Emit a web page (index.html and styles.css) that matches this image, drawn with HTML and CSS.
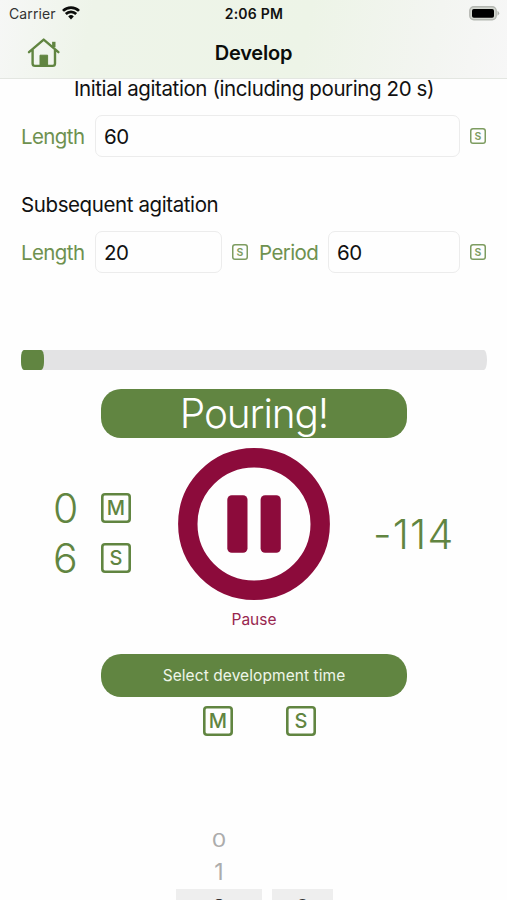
FILE: index.html
```html
<!DOCTYPE html>
<html lang="en">
<head>
<meta charset="utf-8">
<title>Develop</title>
<link rel="stylesheet" href="styles.css">
</head>
<body>
<header class="top">
  <div class="status">
    <div class="carrier"><span>Carrier</span>
      <svg width="18" height="14" viewBox="0 0 18 14" fill="none" stroke="#0b0c0a" stroke-width="2.7"><path d="M1 4.9a11.3 11.3 0 0 1 16 0M3.8 8a7.4 7.4 0 0 1 10.4 0"/><path d="M6.2 10.4a4 4 0 0 1 5.6 0L9 13.4z" fill="#0b0c0a" stroke="none"/></svg>
    </div>
    <div class="clock">2:06 PM</div>
    <svg class="battery" width="31" height="15" viewBox="0 0 31 15"><rect x=".8" y=".8" width="26.4" height="13" rx="4" fill="#d4d7d0" stroke="#b4b7b1" stroke-width="1.4"/><rect x="3" y="3" width="22" height="8.8" rx="1.8" fill="#000"/><path d="M28.5 4.8q3.4 2.4 0 5z" fill="#adb0aa"/></svg>
  </div>
  <div class="nav">
    <svg class="home" width="34" height="32" viewBox="0 0 34 32" fill="none" stroke="#618541" stroke-width="2.4" stroke-linecap="round" stroke-linejoin="round"><path d="M2 15.2 16.7 2.6 31.4 15.2M5.6 13v13.5q0 2.4 2.4 2.4h17.6q2.4 0 2.4-2.4V13"/><path d="M26.8 10.2V4.8" stroke-width="3.4" stroke-linecap="butt"/><path d="M13 28V18.2h7.6V28z" fill="#618541" stroke-width="1"/></svg>
    <h1>Develop</h1>
  </div>
</header>
<main>
  <h2 class="initial"><span>Initial agitation (including pouring 20 s)</span></h2>
  <div class="fields">
    <label>Length</label><div class="input wide">60</div><i class="unit small">S</i>
  </div>
  <h2 class="subsequent"><span>Subsequent agitation</span></h2>
  <div class="fields">
    <label>Length</label><div class="input short">20</div><i class="unit small">S</i>
    <label class="period">Period</label><div class="input medium">60</div><i class="unit small">S</i>
  </div>
  <div class="progress"><div class="fill"></div></div>
  <div class="phase"><span>Pouring!</span></div>
  <div class="timer">
    <div class="elapsed">
      <span>0</span><i class="unit">M</i>
      <span>6</span><i class="unit">S</i>
    </div>
    <svg class="pause" width="152" height="152" viewBox="0 0 152 152"><circle cx="76" cy="76" r="66.2" fill="none" stroke="#8c0b3b" stroke-width="19.4"/><rect x="49.3" y="47.3" width="20.2" height="57.5" rx="4.5" fill="#8c0b3b"/><rect x="82.6" y="47.3" width="20.2" height="57.5" rx="4.5" fill="#8c0b3b"/></svg>
    <div class="remaining"><span>-114</span></div>
  </div>
  <div class="caption"><span>Pause</span></div>
  <div class="select"><span>Select development time</span></div>
  <div class="units"><i class="unit">M</i><i class="unit">S</i></div>
  <div class="picker">
    <div class="wheel minutes"><span class="far">0</span><span class="near">1</span><b>2</b></div>
    <div class="wheel seconds"><b>0</b></div>
  </div>
</main>
</body>
</html>
```
FILE: styles.css
```css
* { box-sizing: border-box; }
body {
  margin: 0;
  height: 900px;
  overflow: hidden;
  background: #fefefe;
  color: #111;
  font-family: Inter, "Liberation Sans", sans-serif;
}
.top {
  height: 79px;
  border-bottom: 1px solid #e3e6e1;
  background: linear-gradient(100deg, #f6f7f6 0%, #eef4e9 18%, #edf4e7 60%, #f3f5f1 85%, #f7f7f7 100%);
}
.status {
  display: grid;
  grid-template-columns: 1fr auto 1fr;
  align-items: center;
  height: 28px;
  padding: 0 7px 0 9px;
}
.carrier { display: flex; align-items: center; gap: 6px; height: 26px; margin-top: -1px; font-size: 14px; letter-spacing: 0.12px; color: #333; }
.carrier svg { margin-top: -1px; }
.clock { margin: -1px 0 0 -1px; font-size: 14px; font-weight: 600; letter-spacing: 0.25px; }
.battery { justify-self: end; margin-top: -2px; }
.nav {
  display: grid;
  grid-template-columns: 1fr auto 1fr;
  align-items: center;
  height: 49px;
  padding: 0 27px;
}
h1 { margin: 0; font-size: 20px; font-weight: 600; letter-spacing: -0.2px; color: #0b0c0a; }
main { height: 821px; padding: 0 20px 0 21px; }
h2 { margin: 0; font-size: 20.5px; font-weight: 400; white-space: nowrap; }
.initial { height: 36px; line-height: 19px; text-align: center; letter-spacing: -0.4px; }
.subsequent { height: 74px; padding-top: 35px; line-height: 26px; letter-spacing: -0.4px; }
.fields { display: flex; align-items: center; height: 42px; }
label { width: 74px; font-size: 20.5px; letter-spacing: -0.6px; color: #6e914f; }
.input {
  height: 42px;
  padding-left: 8px;
  border: 1px solid #ececec;
  border-radius: 7px;
  font-size: 20.5px;
  line-height: 41px;
  letter-spacing: -0.4px;
}
.wide { width: 365px; }
.short { width: 127px; }
.medium { width: 132px; }
.period { width: 69px; margin-left: 11px; }
.unit {
  display: flex;
  align-items: center;
  justify-content: center;
  width: 30px;
  height: 30px;
  border-radius: 4px;
  box-shadow: inset 0 0 0 2.6px #618541;
  color: #618541;
  font-size: 20px;
  font-style: normal;
  font-weight: 550;
}
.small {
  width: 16px;
  height: 16px;
  margin-left: 10px;
  border-radius: 3px;
  box-shadow: inset 0 0 0 1.5px #7d9c60;
  font-size: 10.5px;
  font-weight: 600;
  color: #7d9c60;
}
.progress { height: 20px; margin: 76.5px 0 19px; border-radius: 3px / 10px; background: #e3e3e4; }
.fill { width: 23px; height: 20px; border-radius: 3px / 8px; background: #618541; }
.phase, .select {
  display: flex;
  align-items: center;
  justify-content: center;
  width: 306px;
  margin-left: 80px;
  border-radius: 20px;
  background: #618541;
  color: #fff;
}
.phase { height: 49px; font-size: 40.5px; font-weight: 350; letter-spacing: -1.1px; }
.timer { display: grid; grid-template-columns: 157px 152px 1fr; height: 152px; margin-top: 10.5px; }
.elapsed {
  display: grid;
  grid-template-columns: 48px 30px;
  grid-auto-rows: 50px;
  align-items: center;
  align-content: start;
  padding: 35px 0 0 32px;
  font-size: 41px;
  font-weight: 350;
  color: #618541;
}
.remaining { display: flex; align-items: center; padding: 19px 0 0 43px; font-size: 41px; font-weight: 350; letter-spacing: 1.2px; color: #618541; }
.caption { height: 54px; padding-top: 10px; line-height: 20px; text-align: center; font-size: 15.5px; color: #98264f; }
.select { height: 43px; font-size: 15.5px; letter-spacing: 0.08px; color: #eef5e8; }
.units { display: flex; gap: 53px; padding: 9px 0 0 182px; height: 128px; }
.picker { display: flex; gap: 10px; padding-left: 155px; color: #acacac; font-size: 23px; }
.wheel { display: flex; flex-direction: column; align-items: center; height: 104px; }
.minutes { width: 86px; }
.seconds { width: 61px; padding-top: 64px; }
.wheel span { height: 32px; line-height: 31px; }
.far { transform: scaleY(0.82); }
.wheel b { width: 100%; height: 40px; line-height: 38px; background: #eee; color: #333; font-weight: 400; text-align: center; }
```
